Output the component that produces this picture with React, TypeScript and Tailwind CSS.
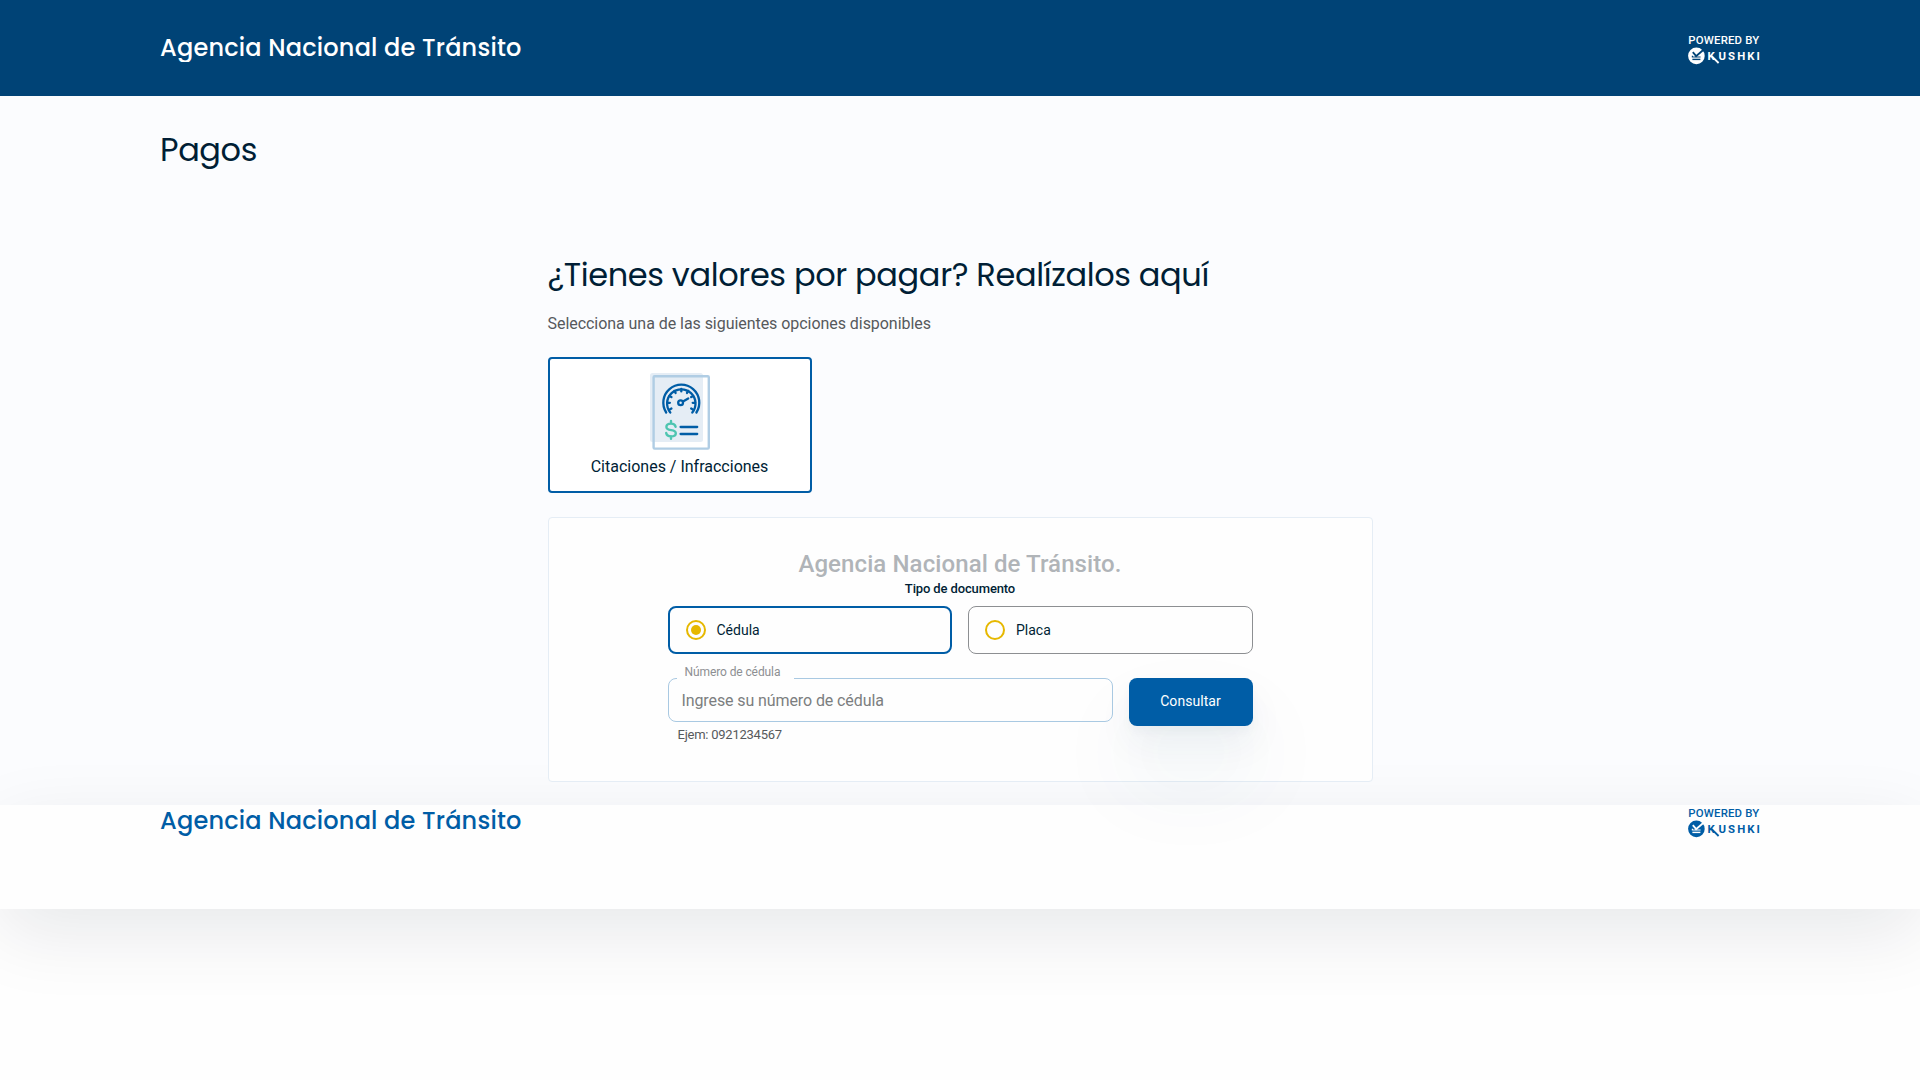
import { useState } from 'react';

const TITLE_FONT = "font-['Poppins',sans-serif]";

function KushkiLogo({ cutout }: { cutout: string }) {
  return (
    <svg width="72" height="32" viewBox="0 0 72 32" fill="currentColor">
      <text x="0.3" y="11.4" fontSize="11.4" fontWeight="500" fontFamily="Roboto, sans-serif" textLength="71">
        POWERED BY
      </text>
      <circle cx="8.4" cy="22.9" r="8.3" />
      <g fill="none" stroke={cutout} strokeWidth="1.8">
        <path d="M16.4 16 7.4 23.8" />
        <path d="M4.8 19.2l3.2 3.6" />
        <path d="M4.4 22.8v1.2h8.2" strokeWidth="1.2" />
        <path d="M4.4 26.4h8" strokeWidth="1.4" />
      </g>
      <text x="19.4" y="27" fontSize="11.4" fontWeight="700" fontFamily="Roboto, sans-serif">
        K
      </text>
      <text x="30.6" y="27" fontSize="11.4" fontWeight="700" fontFamily="Roboto, sans-serif" textLength="41.2">
        USHKI
      </text>
      <path d="M23.2 22.6l7.4 7.4" fill="none" stroke="currentColor" strokeWidth="1.8" />
    </svg>
  );
}

function CitationIcon() {
  const ticks = [-120, -90, -60, -30, 0, 30, 60, 90, 120];

  return (
    <svg width="60" height="77" viewBox="0 0 60 77" fill="none" strokeLinecap="round">
      <rect width="53" height="69" rx="2.5" fill="#e5edf5" />
      <rect x="3.6" y="3.2" width="55.2" height="72.4" rx="1" stroke="#b0cde4" strokeWidth="2.4" />
      <g stroke="#005da6" strokeWidth="2.3">
        <path d="M16.2 39.5A18 18 0 1 1 46.4 39.5" />
        <path d="M20.3 39.5A14.2 14.2 0 1 1 42.3 39.5" />
        {ticks.map((angle) => (
          <path key={angle} d="M31.3 16v2.4" transform={`rotate(${angle} 31.3 29.8)`} />
        ))}
        <circle cx="30.6" cy="29.8" r="2.4" />
        <path d="M33 28.4l5.2-3" />
        <path d="M30.6 54h16.6M30.6 61h16.6" />
      </g>
      <path
        d="M21 48v2.6M21 63.2v2.6M25.6 53.8c-.4-2-2.2-3.2-4.6-3.2-2.8 0-4.6 1.4-4.6 3.4 0 4.8 9.4 1.6 9.4 6.2 0 2-2 3.2-4.8 3.2-2.6 0-4.4-1.2-4.8-3.4"
        stroke="#4ec5b0"
        strokeWidth="2.4"
      />
    </svg>
  );
}

export default function App() {
  const [docType, setDocType] = useState('Cédula');

  return (
    <div className="min-h-screen bg-[#fefefe] font-['Roboto',sans-serif] text-[#001e35]">
      {/* Header */}
      <header className="flex h-24 items-start justify-between bg-[#004376] px-40 pt-[33px] text-white">
        <span className={`${TITLE_FONT} h-[29px] overflow-hidden text-2xl leading-[30px] font-medium tracking-[0.2px]`}>
          Agencia Nacional de Tránsito
        </span>
        <KushkiLogo cutout="#004376" />
      </header>

      {/* Main */}
      <main className="h-[709px] bg-[#fbfcfe] pt-[33px]">
        <h1 className={`${TITLE_FONT} px-40 text-[32px] leading-[42px] tracking-[-0.4px]`}>Pagos</h1>

        <div className="mx-auto w-[825px] pt-[83px]">
          <h2 className={`${TITLE_FONT} text-[32px] leading-[42px] tracking-[-0.36px] whitespace-nowrap`}>
            ¿Tienes valores por pagar? Realízalos aquí
          </h2>
          <p className="mt-4 text-base leading-6 tracking-[-0.05px] text-[#56595c]">
            Selecciona una de las siguientes opciones disponibles
          </p>

          <button className="mt-[21px] flex h-[136px] w-[264px] flex-col items-center rounded border-2 border-[#005da6] bg-white pt-3.5">
            <CitationIcon />
            <span className="mt-[5px] text-base leading-6">Citaciones / Infracciones</span>
          </button>

          {/* Query form */}
          <section className="relative z-10 mt-6 flex h-[265px] flex-col items-center rounded border border-[#e5edf5] bg-[#fefefe] pt-7">
            <h3 className="text-2xl leading-9 font-medium tracking-[0.1px] text-[#b0b4b8]">
              Agencia Nacional de Tránsito.
            </h3>
            <p className="text-[13px] leading-[14px] font-medium tracking-[-0.13px]">Tipo de documento</p>

            <div className="mt-2.5 grid w-[585px] grid-cols-2 gap-4">
              {['Cédula', 'Placa'].map((type) => {
                const active = type === docType;
                return (
                  <button
                    key={type}
                    onClick={() => setDocType(type)}
                    className={`flex h-12 items-center gap-[11px] rounded-lg pl-4 text-sm ${
                      active ? 'border-2 border-[#005da6]' : 'border border-[#8d8f92]'
                    }`}
                  >
                    <span className="flex size-5 items-center justify-center rounded-full border-2 border-[#e6b800]">
                      {active && <span className="size-2.5 rounded-full bg-[#e6b800]" />}
                    </span>
                    {type}
                  </button>
                );
              })}
            </div>

            <div className="mt-6 flex w-[585px] gap-4">
              <div className="flex-1">
                <div className="relative">
                  <input
                    placeholder="Ingrese su número de cédula"
                    className="block h-11 w-full rounded-lg border border-[#a9c9e2] bg-transparent px-[13px] text-base tracking-[-0.1px] placeholder:text-[#7c7e80]"
                  />
                  <label className="absolute -top-3.5 left-[9px] w-[117px] bg-[#fefefe] pl-2 text-xs leading-4 tracking-[-0.1px] text-[#8d8f92]">
                    Número de cédula
                  </label>
                </div>
                <p className="mt-1 pl-2.5 text-[13px] leading-[18px] tracking-[-0.24px] text-[#56595c]">Ejem: 0921234567</p>
              </div>
              <button className="h-12 w-[124px] rounded-lg bg-[#005da6] pb-0.5 text-sm tracking-[0.05px] text-white shadow-[0_50px_90px_rgba(0,93,130,0.08),0_20px_36px_rgba(0,67,100,0.05),0_6px_10px_rgba(0,67,100,0.03)]">
                Consultar
              </button>
            </div>
          </section>
        </div>
      </main>

      {/* Footer */}
      <footer className="flex h-[104px] items-start justify-between bg-[#fefefe] px-40 pt-px text-[#005da6] shadow-[0_23px_76px_rgba(0,20,45,0.095)]">
        <span className={`${TITLE_FONT} text-2xl leading-[30px] font-medium tracking-[0.2px]`}>
          Agencia Nacional de Tránsito
        </span>
        <KushkiLogo cutout="#fefefe" />
      </footer>
    </div>
  );
}
